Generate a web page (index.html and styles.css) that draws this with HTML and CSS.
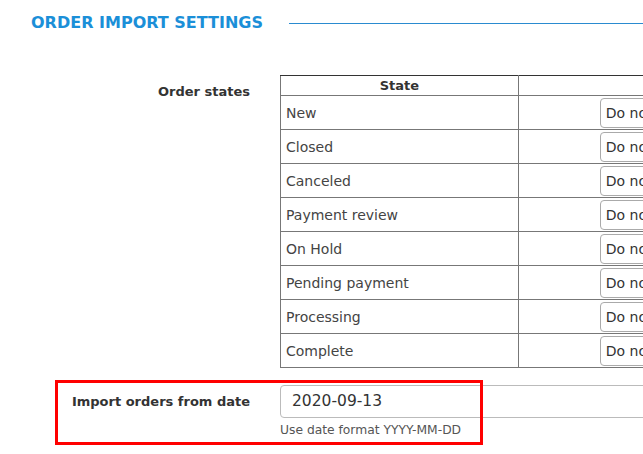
FILE: index.html
```html
<!DOCTYPE html>
<html>
<head>
<meta charset="utf-8">
<link rel="stylesheet" href="styles.css">
</head>
<body>
<div class="page">
  <div class="section-head">
    <h2 class="section-title">ORDER IMPORT SETTINGS</h2>
    <div class="section-line"></div>
  </div>
  <div class="form-row states-row">
    <div class="label">Order states</div>
    <div class="field">
      <table class="states">
        <thead>
          <tr><th class="c1">State</th><th class="c2"></th></tr>
        </thead>
        <tbody>
          <tr><td class="c1">New</td><td class="c2"><div class="select">Do not import</div></td></tr>
          <tr><td class="c1">Closed</td><td class="c2"><div class="select">Do not import</div></td></tr>
          <tr><td class="c1">Canceled</td><td class="c2"><div class="select">Do not import</div></td></tr>
          <tr><td class="c1">Payment review</td><td class="c2"><div class="select">Do not import</div></td></tr>
          <tr><td class="c1">On Hold</td><td class="c2"><div class="select">Do not import</div></td></tr>
          <tr><td class="c1">Pending payment</td><td class="c2"><div class="select">Do not import</div></td></tr>
          <tr><td class="c1">Processing</td><td class="c2"><div class="select">Do not import</div></td></tr>
          <tr><td class="c1">Complete</td><td class="c2"><div class="select">Do not import</div></td></tr>
        </tbody>
      </table>
    </div>
  </div>
  <div class="form-row date-row">
    <div class="label">Import orders from date</div>
    <div class="field">
      <div class="input">2020-09-13</div>
      <div class="help">Use date format YYYY-MM-DD</div>
    </div>
    <div class="highlight"></div>
  </div>
</div>
</body>
</html>
```

FILE: styles.css
```css
html {
  overflow: hidden;
  background: #fff;
}
body {
  margin: 0;
  padding: 0;
  font-family: "DejaVu Sans", sans-serif;
  color: #333;
  min-height: 454px;
}
.page {
  width: 900px;
}
.section-head {
  display: flex;
  align-items: center;
  padding: 11px 0 0 31px;
  height: 24px;
}
.section-title {
  margin: 0;
  font-size: 16px;
  font-weight: bold;
  color: #1b8fd8;
  line-height: 24px;
  white-space: nowrap;
}
.section-line {
  flex: 1;
  height: 1px;
  background: #2a8bd0;
  margin-left: 26px;
}
.form-row {
  display: flex;
  gap: 30px;
}
.label {
  width: 250px;
  flex: none;
  text-align: right;
  font-weight: bold;
  font-size: 13px;
  color: #333;
}
.states-row {
  margin-top: 40px;
}
.states-row .label {
  padding-top: 9px;
}
.states {
  border-collapse: collapse;
  border: 1px solid #333;
  font-size: 14px;
}
.states th {
  height: 19px;
  padding: 0;
  font-weight: bold;
  border: 1px solid #777;
  border-top-color: #333;
  font-size: 13px;
}
.states td {
  height: 33px;
  padding: 0;
  border: 1px solid #777;
  vertical-align: middle;
}
.states .c1 {
  width: 238px;
}
.states td.c1 {
  padding-left: 5px;
  width: 233px;
  color: #444;
}
.states .c2 {
  width: 300px;
}
.states td.c2 {
  padding: 0 0 0 81px;
}
.select {
  height: 30px;
  width: 200px;
  box-sizing: border-box;
  border: 1px solid #aaa;
  border-radius: 4px;
  padding-left: 5px;
  line-height: 28px;
  color: #333;
}
.date-row {
  position: relative;
  margin-top: 17px;
}
.date-row .label {
  padding-top: 9px;
}
.input {
  width: 400px;
  height: 33px;
  box-sizing: border-box;
  border: 1px solid #bbb;
  border-radius: 4px;
  padding-left: 11px;
  line-height: 31px;
  font-size: 15.5px;
  color: #333;
}
.help {
  margin-top: 5px;
  font-size: 12.3px;
  color: #555;
}
.highlight {
  position: absolute;
  left: 55px;
  top: -5px;
  width: 428px;
  height: 65px;
  box-sizing: border-box;
  border: 3px solid #f00;
}
```
